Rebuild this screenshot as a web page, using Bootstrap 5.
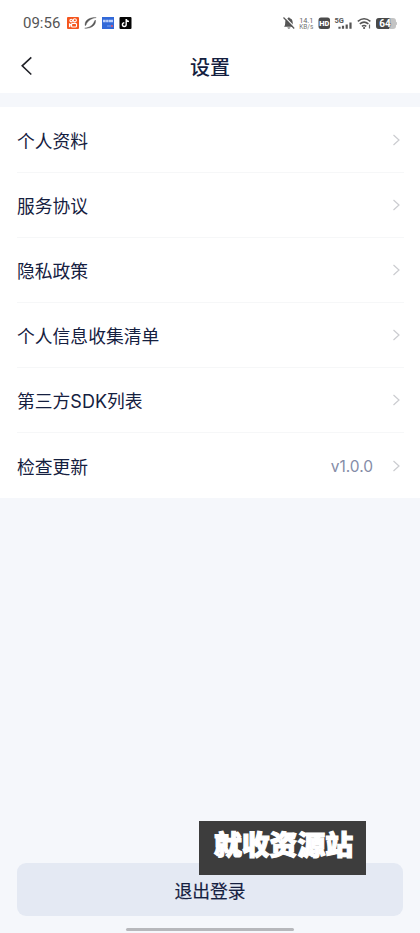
<!DOCTYPE html>
<html lang="zh-CN">
<head>
<meta charset="utf-8">
<meta name="viewport" content="width=device-width, initial-scale=1">
<title>设置</title>
<link href="https://cdn.jsdelivr.net/npm/bootstrap@5.3.0/dist/css/bootstrap.min.css" rel="stylesheet">
<style>
body{font-family:"Noto Sans","Noto Sans CJK SC",sans-serif;background:#f5f7fb;color:#152040;height:933px;overflow:hidden}
svg{display:block;flex:none}
.screen{height:933px}
.status{height:46px;padding:0 22px 0 23px;color:#555}
.clock{font-size:15px;line-height:20px;width:38px;white-space:nowrap;font-family:Roboto,sans-serif;color:#555}
.title-bar{height:47px;padding:0 24px 7px 20px}
.title-text{font:500 20px/28px "Noto Sans CJK SC",sans-serif;padding:1px 0 0 4px}
.back{width:14px;height:20px}
.settings{margin-top:14px}
.setting{height:65.2px;padding:0 19px 0 17px;font-size:17.8px;line-height:26px;color:#152040;background:#fff;position:relative}
.setting .label{font-family:"Noto Sans CJK SC",sans-serif}
.latin{font-family:Inter,sans-serif;font-size:18px;line-height:1}
.setting+.setting::before{content:"";position:absolute;left:17px;right:16px;top:-.6px;height:1px;background:#f6f7f8}
.version{font-family:Inter,sans-serif;font-size:15.5px;color:#858ca7;margin-right:19px;padding-top:2px}
.logout{height:53px;margin:0 17px 12px;padding:1px 0 0;border-radius:9px;background:#e4e9f3;color:#152040;border:0;font:400 17.8px/26px "Noto Sans CJK SC",sans-serif;-webkit-text-stroke:.15px #152040}
.home-bar{width:168px;height:3px;border-radius:2px;background:#b7b8bc;margin-bottom:2px}
.stamp{left:199px;top:821px;width:167px;height:54px;padding-left:2px;background:#3d3d3d;color:#fff;font:900 27.800px/45px "Noto Sans CJK SC",sans-serif;-webkit-text-stroke:1.2px #fff}
</style>
<script src="https://cdn.jsdelivr.net/npm/bootstrap@5.3.0/dist/js/bootstrap.bundle.min.js"></script>
</head>
<body>
<div class="screen d-flex flex-column position-relative">
  <header class="bg-white">
    <div class="status d-flex align-items-center justify-content-between">
      <div class="d-flex align-items-center">
        <span class="clock">09:56</span>
        <svg class="ms-1" width="72" height="14" viewBox="65 17 72 14">
          <rect x="67" y="18" width="12" height="12" rx="1" fill="#f5551d"/>
          <g fill="none" stroke="#fff" stroke-width="1.1"><circle cx="71.2" cy="21.6" r="1.3"/><circle cx="74.8" cy="21.3" r="1.6"/><rect x="71.5" y="24.4" width="5" height="3.6" rx="1"/><path d="M71.5 26 69.5 25v2.5z"/></g>
          <path d="M85.300 26.800C84 22.500 88.500 18 96.200 18.600C92 19.200 87.500 21.500 86 26zM95.400 21C96.500 25.500 92 29.700 84.700 29.200C89 28.800 93 26.500 94.600 22z" fill="#555" stroke="#555" stroke-width=".4"/>
          <rect x="102" y="18" width="12" height="12" fill="#3269d8"/><path d="M103 22h2.700m.4 0h2.500m.4 0h4" stroke="#bcd0fa" stroke-width="2.500"/><path d="M107 27h4" stroke="#7ba4f4"/><path d="M111 27h2" stroke="#e7566b" stroke-width="1.500"/>
          <rect x="119.500" y="18" width="12" height="12" rx="1" fill="#050505"/><path d="M126.200 20v5.600a1.900 1.900 0 1 1-1.900-1.900M126.200 20.200c.3 1.500 1.200 2.200 2.800 2.300" fill="none" stroke="#fff" stroke-width="1.400"/>
        </svg>
      </div>
      <svg width="116" height="16" viewBox="282 15 116 16">
        <g transform="translate(282 16)"><path d="M2 10.700c1-1 1.200-2 1.200-4.200C3.200 3.500 4.700 2.600 6 2.200q.9-1.700 1.800 0c1.700.4 2.900 1.800 2.900 4.300 0 2.200.2 3.200 1.200 4.200zM5.300 11.500h3.200c-.4 1.500-2.800 1.500-3.200 0z" fill="#555"/><path d="M2.700 1l10.800 11" stroke="#fff" stroke-width="1.100"/><path d="M1.500 1.500l10.700 11" stroke="#555" stroke-width="1.200"/></g>
        <text x="306.300" y="22.600" text-anchor="middle" font-family="Roboto" font-size="7.300" fill="#666">14.1</text><text x="306.300" y="29" text-anchor="middle" font-family="Roboto" font-size="6.500" fill="#777">KB/s</text>
        <rect x="318.500" y="17.500" width="11.500" height="11.500" rx="2.500" fill="#4b4b4b"/><text x="324.250" y="26" text-anchor="middle" font-family="Roboto" font-size="7.500" font-weight="900" fill="#fff">HD</text>
        <text x="334.500" y="22.600" font-family="Roboto" font-size="7.500" font-weight="700" fill="#555">5G</text>
        <path d="M339.500 28.800v-2M343 28.800v-3M346.700 28.800v-4.300M350.500 28.800v-6.300" stroke="#555" stroke-width="2.200"/>
        <g fill="none" stroke="#555" stroke-width="1.600"><path d="M357.800 21.300q6.300-5 12.600 0M359.800 23.900q4.300-3.500 8.600 0M361.900 26.300q2.200-1.700 4.400 0"/></g><circle cx="364.100" cy="28" r="1.100" fill="#555"/><path d="M369.500 24.500v4" stroke="#666" stroke-width="1.200"/>
        <path d="M379 18h14q3 0 3 3v.8l1 .7v2l-1 .7v.8q0 3-3 3h-14q-3 0-3-3v-5q0-3 3-3z" fill="#c4c4c4"/><path d="M379 18h10v11h-10q-3 0-3-3v-5q0-3 3-3z" fill="#494949"/><text x="385" y="27.100" text-anchor="middle" font-family="Roboto" font-size="10" font-weight="700" fill="#fff" stroke="#494949" stroke-width=".8" paint-order="stroke">64</text>
      </svg>
    </div>
    <div class="title-bar d-flex align-items-center justify-content-between">
      <svg class="back" viewBox="0 0 14 20"><path d="M11.300 1.300 2.200 9.800l9.100 8.700" fill="none" stroke="#202127" stroke-width="1.600"/></svg>
      <div class="title-text">设置</div>
      <span class="back"></span>
    </div>
  </header>
  <main class="settings list-group list-group-flush">
    <a class="setting d-flex align-items-center text-decoration-none" href="#"><span class="label me-auto">个人资料</span><svg width="9" height="12" viewBox="0 0 9 12"><path d="M1.500 1l5.500 5-5.500 5" fill="none" stroke="#cbccd0" stroke-width="1.200"/></svg></a>
    <a class="setting d-flex align-items-center text-decoration-none" href="#"><span class="label me-auto">服务协议</span><svg width="9" height="12" viewBox="0 0 9 12"><path d="M1.500 1l5.500 5-5.500 5" fill="none" stroke="#cbccd0" stroke-width="1.200"/></svg></a>
    <a class="setting d-flex align-items-center text-decoration-none" href="#"><span class="label me-auto">隐私政策</span><svg width="9" height="12" viewBox="0 0 9 12"><path d="M1.500 1l5.500 5-5.500 5" fill="none" stroke="#cbccd0" stroke-width="1.200"/></svg></a>
    <a class="setting d-flex align-items-center text-decoration-none" href="#"><span class="label me-auto">个人信息收集清单</span><svg width="9" height="12" viewBox="0 0 9 12"><path d="M1.500 1l5.500 5-5.500 5" fill="none" stroke="#cbccd0" stroke-width="1.200"/></svg></a>
    <a class="setting d-flex align-items-center text-decoration-none" href="#"><span class="label me-auto">第三方<span class="latin">SDK</span>列表</span><svg width="9" height="12" viewBox="0 0 9 12"><path d="M1.500 1l5.500 5-5.500 5" fill="none" stroke="#cbccd0" stroke-width="1.200"/></svg></a>
    <a class="setting d-flex align-items-center text-decoration-none" href="#"><span class="label me-auto">检查更新</span><span class="version">v1.0.0</span><svg width="9" height="12" viewBox="0 0 9 12"><path d="M1.500 1l5.500 5-5.500 5" fill="none" stroke="#cbccd0" stroke-width="1.200"/></svg></a>
  </main>
  <button class="logout mt-auto" type="button">退出登录</button>
  <div class="home-bar mx-auto"></div>
  <div class="stamp position-absolute text-center">就收资源站</div>
</div>
</body>
</html>
